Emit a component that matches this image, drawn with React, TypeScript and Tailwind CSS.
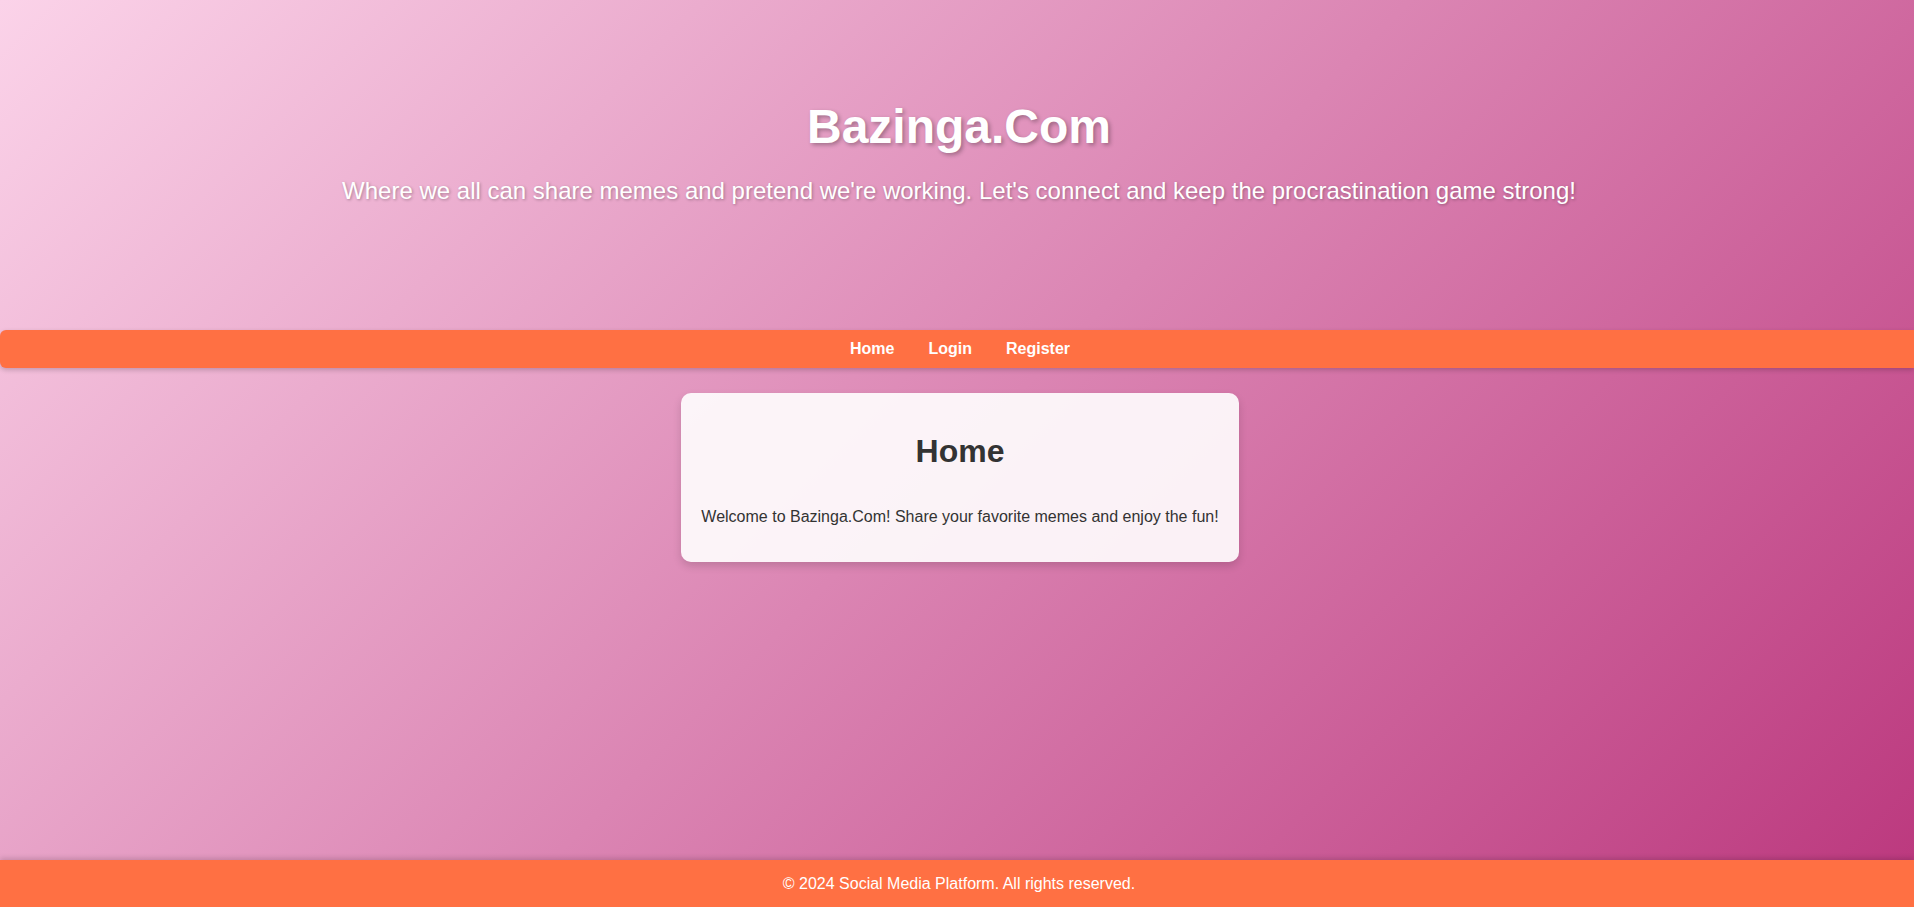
import React from "react";

export default function App() {
  return (
    <div
      className="min-h-screen w-full flex flex-col bg-[linear-gradient(135deg,#fbd3e9_0%,#bb377d_100%)] overflow-hidden"
      style={{ fontFamily: '"Liberation Sans", Arial, sans-serif' }}
    >
      <header className="h-[330px] flex flex-col items-center pl-[4px] text-white text-center">
        <h1 className="mt-[99px] text-[48px] leading-[55px] font-bold [text-shadow:2px_2px_4px_rgba(0,0,0,0.3)]">
          Bazinga.Com
        </h1>
        <p className="mt-[23px] text-[24px] leading-[28px] [text-shadow:1px_1px_3px_rgba(0,0,0,0.3)]">
          Where we all can share memes and pretend we're working. Let's connect and keep the procrastination game strong!
        </p>
      </header>

      <nav className="h-[38px] bg-[#ff7043] rounded-l-[6px] flex items-center justify-center gap-[34px] pl-[2px] shadow-[0_2px_5px_rgba(0,0,0,0.2)]">
        <a className="text-white font-bold text-[16px] leading-[18px] pl-[4px]">Home</a>
        <a className="text-white font-bold text-[16px] leading-[18px]">Login</a>
        <a className="text-white font-bold text-[16px] leading-[18px]">Register</a>
      </nav>

      <main className="flex-1 flex justify-center pt-[25px] pl-[6px]">
        <div className="w-[558px] h-[169px] self-start bg-white/90 rounded-[10px] shadow-[0_4px_8px_rgba(0,0,0,0.15)] px-[20px] pt-[20px] text-center text-[#333]">
          <h2 className="mt-[20px] text-[32px] leading-[37px] font-bold">Home</h2>
          <p className="mt-[38px] text-[16px] leading-[18px]">
            Welcome to Bazinga.Com! Share your favorite memes and enjoy the fun!
          </p>
        </div>
      </main>

      <footer className="h-[47px] bg-[#ff7043] flex items-center justify-center pl-[4px] text-white text-[16px] shadow-[0_-2px_5px_rgba(0,0,0,0.15)]">
        © 2024 Social Media Platform. All rights reserved.
      </footer>
    </div>
  );
}
